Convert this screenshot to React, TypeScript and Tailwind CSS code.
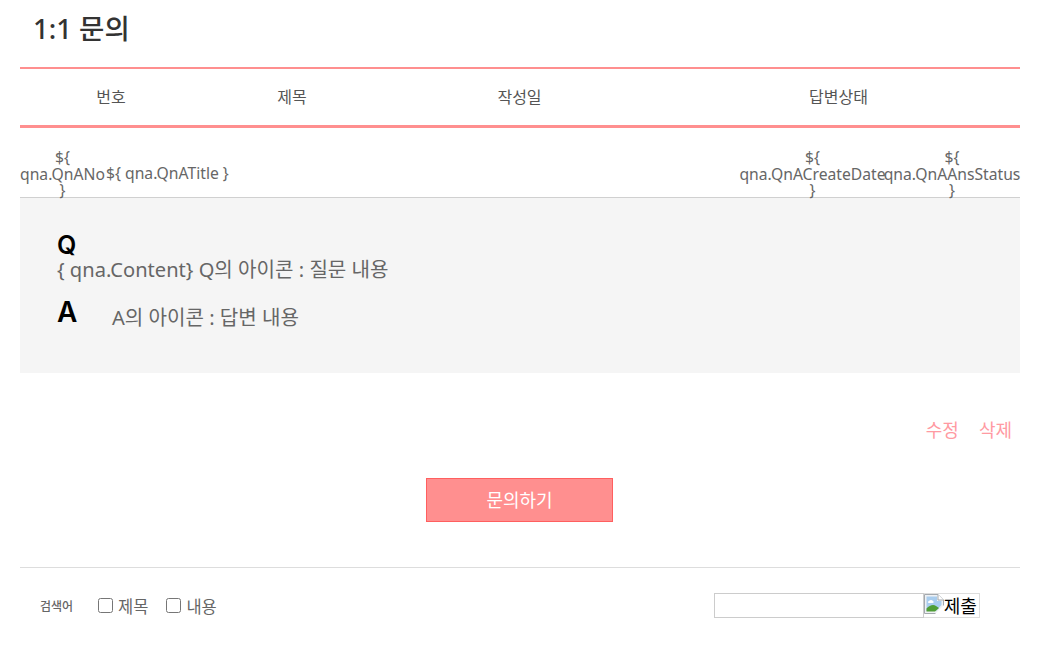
import React from "react";

const font = "font-['Noto_Sans','Noto_Sans_CJK_KR',sans-serif]";

const ValueCell = ({ name, className }: { name: string; className: string }) => (
  <div className={`flex flex-col items-center text-center whitespace-nowrap ${className}`}>
    <span>{"${"}</span>
    <span>{name}</span>
    <span>{"}"}</span>
  </div>
);

const BrokenImage = () => (
  <svg width="20" height="20" viewBox="0 0 20 20" className="shrink-0 self-start">
    <path d="M0.5 0.5H14L19.5 6V19.5H0.5Z" fill="#eef1f4" stroke="#a4a9ae" />
    <path d="M2.5 2.5H13V7H17.5V11L12 17H2.5Z" fill="#a9cdee" />
    <path d="M5 7C6 5.5 8 5.5 9 7C10 7.5 10 9 8.5 9H5C3.5 9 3.5 7.5 5 7Z" fill="#fff" />
    <path d="M2.5 17.5V14.5C5.5 11.5 9 10 12 12L15 14L11 17.5Z" fill="#4f9e35" />
    <path d="M14 0.5V6H19.5" fill="#fff" stroke="#a4a9ae" />
    <path d="M11 20L20 11V20Z" fill="#fff" />
  </svg>
);

export default function App() {
  return (
    <div className={`w-[1056px] h-[649px] overflow-hidden bg-white px-5 text-[#666] ${font}`}>
      <h1 className="h-[67px] pl-[13px] pt-[9px] text-[27.5px] leading-[40px] font-medium text-[#333]">
        1:1 문의
      </h1>

      <div className="w-[1000px]">
        <div className="grid h-[61px] grid-cols-[182px_180px_275px_363px] items-center border-t-2 border-b-[3px] border-[#ff8f8f] text-[16px] text-center text-[#555]">
          <div>번호</div>
          <div>제목</div>
          <div>작성일</div>
          <div>답변상태</div>
        </div>

        <div className="flex h-[70px] items-start border-b border-[#d0d0d0] pt-[21px] text-[15.7px] leading-[16.5px]">
          <ValueCell name="qna.QnANo" className="w-[85px]" />
          <div className="mt-[16px] ml-px w-[635px] whitespace-nowrap">{"${ qna.QnATitle }"}</div>
          <ValueCell name="qna.QnACreateDate" className="w-[143px]" />
          <ValueCell name="qna.QnAAnsStatus" className="w-[136px]" />
        </div>

        <div className="h-[175px] bg-[#f5f5f5] pl-[37px] pt-[35px] text-[20.1px] leading-[26px]">
          <div className="text-[25px] leading-[24px] font-semibold text-black font-['Inter',sans-serif]">Q</div>
          <div className="whitespace-nowrap">{"{ qna.Content} Q의 아이콘 : 질문 내용"}</div>
          <div className="mt-[12px] flex items-start">
            <span className="w-[55px] text-[28px] leading-[34px] font-semibold text-black font-['Inter',sans-serif]">A</span>
            <span className="mt-[10px]">A의 아이콘 : 답변 내용</span>
          </div>
        </div>

        <div className="flex justify-end gap-[20px] pt-[45px] pr-[8px] text-[18px] leading-[24px] text-[#ff9aa2]">
          <a>수정</a>
          <a>삭제</a>
        </div>

        <div className="mt-[36px] flex justify-center pr-[1px]">
          <button className="h-[44px] w-[187px] border border-[#ff5f5f] bg-[#ff8f8f] text-[18px] text-white">
            문의하기
          </button>
        </div>

        <div className="mt-[45px] flex h-[52px] items-start border-t border-[#ddd] pl-[20px] pt-[25px]">
          <span className="mt-[6px] w-[58px] text-[12px] leading-[16px] font-medium text-[#666]">검색어</span>
          <label className="flex h-[25px] items-center gap-[5px] text-[16.5px]">
            <input type="checkbox" className="h-[15px] w-[15px] appearance-auto" />
            <span className="mt-[4px]">제목</span>
          </label>
          <label className="ml-[18px] flex h-[25px] items-center gap-[5px] text-[16.5px]">
            <input type="checkbox" className="h-[15px] w-[15px] appearance-auto" />
            <span className="mt-[4px]">내용</span>
          </label>
          <div className="ml-[497px] flex h-[25px] items-stretch">
            <input type="text" className="w-[210px] border border-[#ccc] bg-white" />
            <button className="flex w-[56px] items-center border border-l-0 border-[#ddd] text-[18px] leading-none text-black">
              <BrokenImage />
              제출
            </button>
          </div>
        </div>
      </div>
    </div>
  );
}
